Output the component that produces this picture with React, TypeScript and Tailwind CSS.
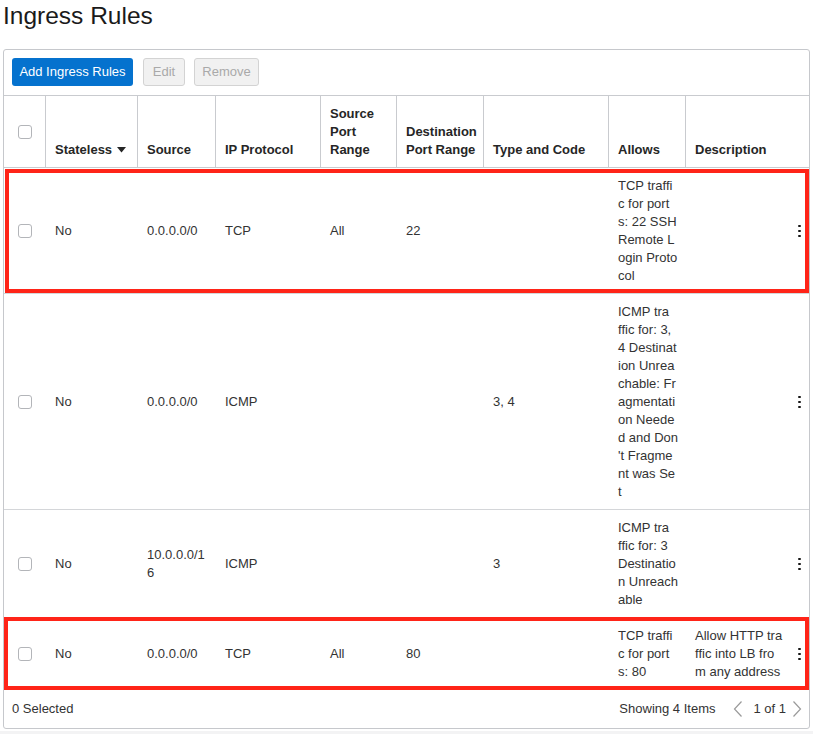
import React from "react";

type Row = {
  stateless: string;
  source: string[];
  proto: string;
  spr: string;
  dpr: string;
  tc: string;
  allows: string[];
  desc: string[];
  highlight?: "first" | "last";
};

const rows: Row[] = [
  {
    stateless: "No",
    source: ["0.0.0.0/0"],
    proto: "TCP",
    spr: "All",
    dpr: "22",
    tc: "",
    allows: ["TCP traffi", "c for port", "s: 22 SSH", "Remote L", "ogin Proto", "col"],
    desc: [],
    highlight: "first",
  },
  {
    stateless: "No",
    source: ["0.0.0.0/0"],
    proto: "ICMP",
    spr: "",
    dpr: "",
    tc: "3, 4",
    allows: [
      "ICMP tra",
      "ffic for: 3,",
      "4 Destinat",
      "ion Unrea",
      "chable: Fr",
      "agmentati",
      "on Neede",
      "d and Don",
      "'t Fragme",
      "nt was Se",
      "t",
    ],
    desc: [],
  },
  {
    stateless: "No",
    source: ["10.0.0.0/1", "6"],
    proto: "ICMP",
    spr: "",
    dpr: "",
    tc: "3",
    allows: ["ICMP tra", "ffic for: 3", "Destinatio", "n Unreach", "able"],
    desc: [],
  },
  {
    stateless: "No",
    source: ["0.0.0.0/0"],
    proto: "TCP",
    spr: "All",
    dpr: "80",
    tc: "",
    allows: ["TCP traffi", "c for port", "s: 80"],
    desc: ["Allow HTTP tra", "ffic into LB fro", "m any address"],
    highlight: "last",
  },
];

const GRID =
  "grid grid-cols-[41px_92px_78px_105px_76px_87px_125px_77px_102px_22px]";

function Checkbox() {
  return (
    <span className="block w-[14px] h-[14px] rounded-[3px] border border-[#b3b5b9] bg-white" />
  );
}

function Lines({ lines }: { lines: string[] }) {
  return (
    <div>
      {lines.map((l, i) => (
        <div key={i} className="whitespace-nowrap">
          {l}
        </div>
      ))}
    </div>
  );
}

function Kebab() {
  return (
    <div className="flex flex-col items-center gap-[2.5px]">
      <span className="block w-[2.5px] h-[2.5px] rounded-full bg-[#161616]" />
      <span className="block w-[2.5px] h-[2.5px] rounded-full bg-[#161616]" />
      <span className="block w-[2.5px] h-[2.5px] rounded-full bg-[#161616]" />
    </div>
  );
}

function HeaderCell({
  lines,
  sort,
  border = true,
  span2,
}: {
  lines: string[];
  sort?: boolean;
  border?: boolean;
  span2?: boolean;
}) {
  return (
    <div
      className={`${border ? "border-l border-[#c9cbcf]" : ""} ${
        span2 ? "col-span-2" : ""
      } flex flex-col justify-end pl-[9px] pb-[9px] pt-[9px] font-bold text-[#262626]`}
    >
      {lines.map((l, i) => (
        <div key={i} className="whitespace-nowrap flex items-center">
          {l}
          {sort && i === lines.length - 1 ? (
            <svg width="9" height="6" viewBox="0 0 9 6" className="ml-[5px]">
              <polygon points="0,0 9,0 4.5,5.5" fill="#262626" />
            </svg>
          ) : null}
        </div>
      ))}
    </div>
  );
}

function BodyRow({ r }: { r: Row }) {
  const cell = "flex items-center pl-[10px]";
  return (
    <div className={`relative ${GRID} border-b border-[#d4d6d9] pt-[9px] pb-[8px] text-[#333]`}>
      <div className="flex items-center justify-center pl-[1px]">
        <Checkbox />
      </div>
      <div className={cell}>{r.stateless}</div>
      <div className={cell}>
        <Lines lines={r.source} />
      </div>
      <div className={cell}>{r.proto}</div>
      <div className={cell}>{r.spr}</div>
      <div className={cell}>{r.dpr}</div>
      <div className={cell}>{r.tc}</div>
      <div className={cell}>
        <Lines lines={r.allows} />
      </div>
      <div className={cell}>
        <Lines lines={r.desc} />
      </div>
      <div className="flex items-center justify-center pl-[3px]">
        <Kebab />
      </div>
      {r.highlight === "first" ? (
        <div className="pointer-events-none absolute left-[1px] right-[0px] top-[1px] bottom-[0px] border-[4px] border-[#ff2418]" />
      ) : null}
      {r.highlight === "last" ? (
        <div className="pointer-events-none absolute left-[0px] right-[0px] top-[-1px] bottom-[-1px] border-[4px] border-[#ff2418]" />
      ) : null}
    </div>
  );
}

export default function App() {
  return (
    <div
      className="h-[734px] flex flex-col bg-white text-[13px] leading-[18px]"
      style={{ fontFamily: '"Liberation Sans", Arial, Helvetica, sans-serif' }}
    >
      <h1 className="mt-[1px] pl-[3px] text-[24.5px] leading-[30px] font-normal text-[#1a1a1a]">
        Ingress Rules
      </h1>
      <div className="mt-[18px] mx-[3px] w-[807px] border border-[#c6c8cc] rounded-[3px] bg-white">
        {/* toolbar */}
        <div className="flex items-center pl-[8px] pt-[8px] pb-[9px] border-b border-[#c9cbcf]">
          <button className="h-[28px] w-[121px] rounded-[3px] bg-[#0572ce] text-white text-[13px]">
            Add Ingress Rules
          </button>
          <button className="ml-[10px] h-[28px] w-[42px] rounded-[3px] bg-[#f1f1f1] border border-[#d3d3d3] text-[#a9a9a9] text-[13px]">
            Edit
          </button>
          <button className="ml-[9px] h-[28px] w-[65px] rounded-[3px] bg-[#f1f1f1] border border-[#d3d3d3] text-[#a9a9a9] text-[13px]">
            Remove
          </button>
        </div>
        {/* header */}
        <div className={`${GRID} h-[72px] border-b border-[#c9cbcf]`}>
          <div className="flex items-center justify-center pl-[1px]">
            <Checkbox />
          </div>
          <HeaderCell lines={["Stateless"]} sort />
          <HeaderCell lines={["Source"]} />
          <HeaderCell lines={["IP Protocol"]} />
          <HeaderCell lines={["Source", "Port", "Range"]} />
          <HeaderCell lines={["Destination", "Port Range"]} />
          <HeaderCell lines={["Type and Code"]} />
          <HeaderCell lines={["Allows"]} />
          <HeaderCell lines={["Description"]} span2 />
        </div>
        {rows.map((r, i) => (
          <BodyRow key={i} r={r} />
        ))}
        {/* footer */}
        <div className="h-[38px] flex items-center justify-between pl-[8px] pr-[7px] text-[#333]">
          <span>0 Selected</span>
          <div className="flex items-center">
            <span>Showing 4 Items</span>
            <svg width="10" height="18" viewBox="0 0 10 18" className="ml-[18px]">
              <polyline points="8.5,1.5 1.5,9 8.5,16.5" fill="none" stroke="#9a9a9a" strokeWidth="1.2" />
            </svg>
            <span className="ml-[10px]">1 of 1</span>
            <svg width="10" height="18" viewBox="0 0 10 18" className="ml-[6px]">
              <polyline points="1.5,1.5 8.5,9 1.5,16.5" fill="none" stroke="#9a9a9a" strokeWidth="1.2" />
            </svg>
          </div>
        </div>
      </div>
      <div className="flex-1 mt-[2px] bg-[#f3f3f4]" />
    </div>
  );
}
